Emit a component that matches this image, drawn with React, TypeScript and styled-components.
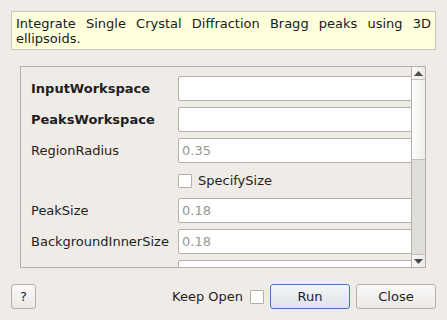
import React from "react";
import styled, { createGlobalStyle } from "styled-components";

const Global = createGlobalStyle`
  html, body { margin: 0; padding: 0; background: #efebe7; }
  body { font-family: "DejaVu Sans", "Liberation Sans", sans-serif; font-size: 13px; color: #1e1e1e; }
  * { box-sizing: border-box; }
`;

const Page = styled.div`
  width: 447px;
  height: 320px;
  display: flex;
  flex-direction: column;
  padding: 11px 11px 0 11px;
  background: #efebe7;
  overflow: hidden;
`;

const Description = styled.div`
  width: 425px;
  height: 39px;
  border: 1px solid #c8c5c1;
  background: #ffffdc;
  padding: 4px 4px 0 4px;
  line-height: 15px;
  text-align: justify;
  color: #1a1a1a;
`;

const ScrollArea = styled.div`
  margin: 16px 0 0 9px;
  width: 406px;
  height: 202px;
  border: 1px solid #b4b0ac;
  display: flex;
  background: #efebe7;
`;

const Viewport = styled.div`
  flex: 1;
  overflow: hidden;
  padding: 9px 0 0 10px;
`;

const Form = styled.div`
  display: grid;
  grid-template-columns: 147px 250px;
  row-gap: 6px;
  align-items: center;
`;

const Label = styled.div<{ $bold?: boolean }>`
  font-weight: ${(p) => (p.$bold ? "bold" : "normal")};
  white-space: nowrap;
  color: #1e1e1e;
`;

const Input = styled.div`
  height: 25px;
  border: 1px solid #b3afab;
  border-radius: 2px;
  background: #ffffff;
  display: flex;
  align-items: center;
  padding-left: 3px;
  color: #9a9794;
`;

const CheckRow = styled.div`
  height: 23px;
  display: flex;
  align-items: center;
  gap: 6px;
`;

const Box = styled.span`
  display: inline-block;
  width: 14px;
  height: 14px;
  border: 1px solid #b3afab;
  border-radius: 1px;
  background: #ffffff;
`;

const ScrollBar = styled.div`
  width: 14px;
  border-left: 1px solid #b4b0ac;
  display: flex;
  flex-direction: column;
`;

const ArrowBtn = styled.div<{ $top?: boolean }>`
  height: 13px;
  display: flex;
  align-items: center;
  justify-content: center;
  background: linear-gradient(to right, #fbfaf9, #ebe9e6);
  ${(p) => (p.$top ? "border-bottom: 1px solid #c4c0bc;" : "border-top: 1px solid #c4c0bc;")}
`;

const Handle = styled.div`
  height: 80px;
  background: linear-gradient(to right, #fdfdfc, #efedea);
  border-bottom: 1px solid #c4c0bc;
`;

const Groove = styled.div`
  flex: 1;
  background: #e0dedb;
`;

const Footer = styled.div`
  margin-top: 16px;
  display: flex;
  align-items: center;
  height: 25px;
`;

const Button = styled.button<{ $primary?: boolean; $w?: number }>`
  width: ${(p) => p.$w ?? 80}px;
  height: 25px;
  padding: 0;
  font-family: inherit;
  font-size: 13px;
  color: #1e1e1e;
  border-radius: 3px;
  border: 1px solid ${(p) => (p.$primary ? "#3d7ab5" : "#b3afab")};
  background: ${(p) =>
    p.$primary
      ? "linear-gradient(#f4f6f8, #dfe3e7)"
      : "linear-gradient(#fbfaf9, #ebe8e5)"};
`;

const Spacer = styled.div`
  flex: 1;
`;

const KeepOpen = styled.div`
  display: flex;
  align-items: center;
  gap: 7px;
  margin-right: 6px;
`;

const Up = () => (
  <svg width="9" height="5" viewBox="0 0 9 5">
    <path d="M0 5 L4.5 0 L9 5 Z" fill="#4a4a4a" />
  </svg>
);
const Down = () => (
  <svg width="9" height="5" viewBox="0 0 9 5">
    <path d="M0 0 L4.5 5 L9 0 Z" fill="#4a4a4a" />
  </svg>
);

export default function App() {
  return (
    <Page>
      <Global />
      <Description>Integrate Single Crystal Diffraction Bragg peaks using 3D ellipsoids.</Description>
      <ScrollArea>
        <Viewport>
          <Form>
            <Label $bold>InputWorkspace</Label>
            <Input />
            <Label $bold>PeaksWorkspace</Label>
            <Input />
            <Label>RegionRadius</Label>
            <Input>0.35</Input>
            <div />
            <CheckRow>
              <Box />
              <span>SpecifySize</span>
            </CheckRow>
            <Label>PeakSize</Label>
            <Input>0.18</Input>
            <Label>BackgroundInnerSize</Label>
            <Input>0.18</Input>
            <Label>BackgroundOuterSize</Label>
            <Input>0.23</Input>
          </Form>
        </Viewport>
        <ScrollBar>
          <ArrowBtn $top>
            <Up />
          </ArrowBtn>
          <Handle />
          <Groove />
          <ArrowBtn>
            <Down />
          </ArrowBtn>
        </ScrollBar>
      </ScrollArea>
      <Footer>
        <Button $w={25}>?</Button>
        <Spacer />
        <KeepOpen>
          <span>Keep Open</span>
          <Box />
        </KeepOpen>
        <Button $primary>Run</Button>
        <Button style={{ marginLeft: 6 }}>Close</Button>
      </Footer>
    </Page>
  );
}
